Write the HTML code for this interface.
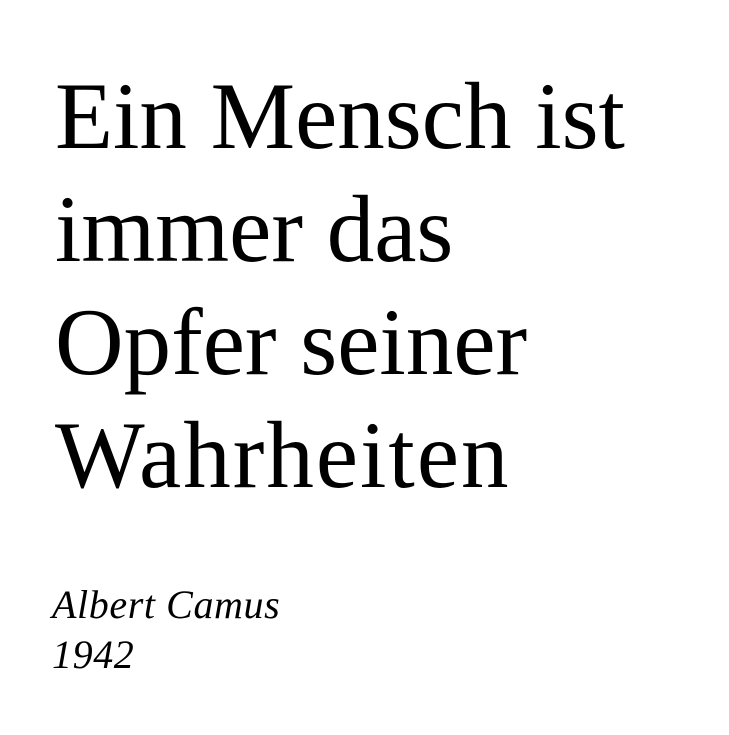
<!DOCTYPE html>
<html><head><meta charset="utf-8"><style>
html,body{margin:0;padding:0;background:#fff;width:729px;height:735px;overflow:hidden}
.q{position:absolute;left:55px;top:60px;font-family:"Liberation Serif",serif;font-size:95px;line-height:113px;color:#000;white-space:nowrap}
.w{letter-spacing:2px}
.a{position:absolute;left:52px;top:580px;font-family:"Liberation Serif",serif;font-style:italic;font-size:40px;letter-spacing:0.6px;line-height:50px;color:#000;white-space:nowrap}
</style></head><body>
<div class="q">Ein Mensch ist<br>immer das<br>Opfer seiner<br><span class="w">Wahrheiten</span></div>
<div class="a">Albert Camus<br>1942</div>
</body></html>
